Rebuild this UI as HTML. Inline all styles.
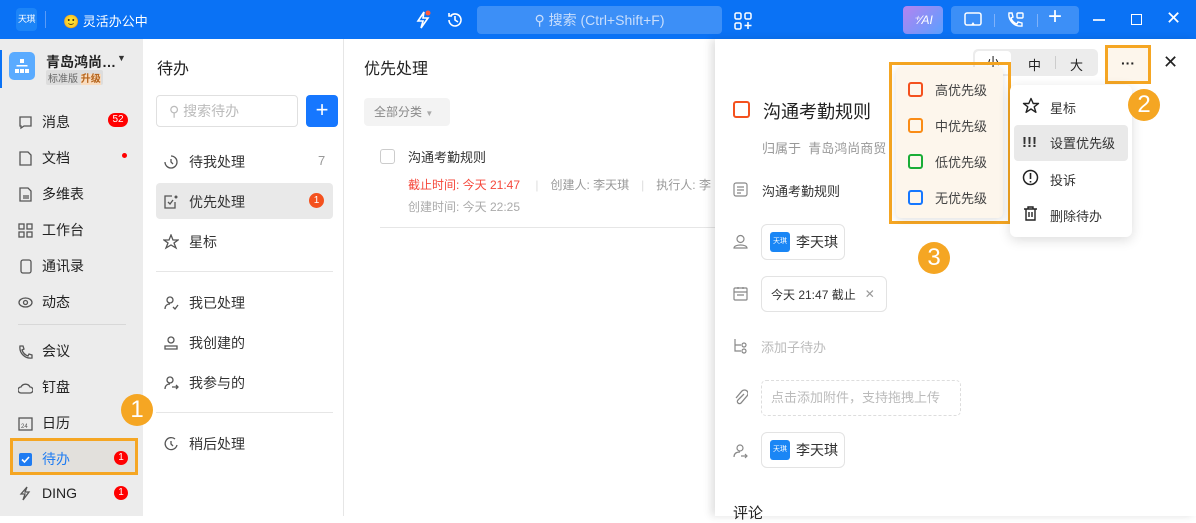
<!DOCTYPE html>
<html><head><meta charset="utf-8"><style>
*{margin:0;padding:0;box-sizing:border-box}
body{width:1196px;height:516px;overflow:hidden;position:relative;font-family:"Liberation Sans","Noto Sans CJK SC",sans-serif;background:#fff;color:#222}
.a{position:absolute}
.top{left:0;top:0;width:1196px;height:39px;background:#0a72f5}
.side{left:0;top:39px;width:143px;height:477px;background:#ececec}
.col2{left:143px;top:39px;width:201px;height:477px;background:#fff;border-right:1px solid #e6e6e6}
.nav{position:absolute;left:18px;font-size:14px;color:#222;display:flex;align-items:center}
.nav svg{margin-right:9px}
.badge{position:absolute;background:#f00;color:#fff;border-radius:9px;font-size:10px;text-align:center;line-height:14px;height:14px}
.c2{position:absolute;left:163px;font-size:14px;color:#333;display:flex;align-items:center}
.c2 svg{margin-right:10px}
.num{position:absolute;width:32px;height:32px;border-radius:50%;background:#f5a623;color:#fff;font-size:24px;text-align:center;line-height:32px}
.pr{position:absolute;left:908px;display:flex;align-items:center;font-size:13px;color:#444}
.pr i{display:inline-block;width:15px;height:15px;border:2px solid;border-radius:3px;margin-right:12px}
.mi{position:absolute;left:1022px;font-size:13px;color:#333;display:flex;align-items:center}
.chip{position:absolute;border:1px solid #e3e3e3;border-radius:6px;display:flex;align-items:center;font-size:14px;color:#333}
.av{width:20px;height:20px;background:#1a86f5;color:#fff;font-size:7px;border-radius:3px;text-align:center;line-height:20px;margin:0 6px 0 8px;white-space:nowrap;overflow:hidden}
.ic{position:absolute;left:733px}
</style></head><body>
<div class="a top"></div>
<div class="a" style="left:16px;top:8px;width:21px;height:23px;background:#1c84f7;border-radius:4px;color:#fff;font-size:9px;line-height:23px;text-align:center;white-space:nowrap;overflow:hidden;letter-spacing:-0.5px">天琪</div>
<div class="a" style="left:45px;top:11px;width:1px;height:17px;background:#5a9bf7"></div>
<div class="a" style="left:63px;top:11px;color:#fff;font-size:13px">🙂 灵活办公中</div>
<svg class="a" style="left:414px;top:10px" width="18" height="20" viewBox="0 0 18 20"><path d="M10 2 L4 11 H9 L7 18 L14 8 H9 Z" fill="none" stroke="#fff" stroke-width="1.6"/><circle cx="14" cy="3" r="2.5" fill="#ff5a3c"/></svg>
<svg class="a" style="left:446px;top:11px" width="18" height="18" viewBox="0 0 18 18"><path d="M3 9a6 6 0 1 0 2-4.5M3 2v3h3M9 5v4l3 2" fill="none" stroke="#fff" stroke-width="1.6"/></svg>
<div class="a" style="left:477px;top:6px;width:245px;height:28px;background:#3c8ff7;border-radius:4px;color:#c9defc;font-size:14px;line-height:28px;text-align:center">⚲ 搜索 (Ctrl+Shift+F)</div>
<svg class="a" style="left:734px;top:12px" width="18" height="18" viewBox="0 0 18 18"><g fill="none" stroke="#fff" stroke-width="1.5"><rect x="1" y="1" width="6" height="6" rx="1.5"/><rect x="11" y="1" width="6" height="6" rx="1.5"/><rect x="1" y="11" width="6" height="6" rx="1.5"/><path d="M14 10v7M10.5 13.5h7"/></g></svg>
<div class="a" style="left:903px;top:6px;width:40px;height:28px;border-radius:4px;background:linear-gradient(135deg,#b383f0,#5aa0ff);color:#fff;font-size:12px;line-height:28px;text-align:center;font-style:italic">⁺⁄AI</div>
<div class="a" style="left:951px;top:6px;width:128px;height:28px;border-radius:4px;background:#3c8ff7"></div>
<svg class="a" style="left:964px;top:12px" width="18" height="16"><rect x="1" y="1" width="16" height="12" rx="2" fill="none" stroke="#fff" stroke-width="1.5"/><path d="M7 13l2-3 2 3z" fill="#fff"/></svg>
<div class="a" style="left:994px;top:14px;width:1px;height:13px;background:#7fb2fa"></div>
<svg class="a" style="left:1006px;top:11px" width="18" height="18"><path d="M3 2l3 0 1 4-2 1c1 3 3 5 6 6l1-2 4 1v3c-8 1-14-6-13-13z" fill="none" stroke="#fff" stroke-width="1.4"/><rect x="11" y="2" width="6" height="5" rx="1" fill="none" stroke="#fff" stroke-width="1.4"/></svg>
<div class="a" style="left:1037px;top:14px;width:1px;height:13px;background:#7fb2fa"></div>
<div class="a" style="left:1048px;top:3px;color:#fff;font-size:24px;font-weight:300">+</div>
<div class="a" style="left:1093px;top:19px;width:12px;height:1.5px;background:#d7e7fd"></div>
<div class="a" style="left:1131px;top:14px;width:11px;height:11px;border:1.5px solid #fff"></div>
<div class="a" style="left:1166px;top:8px;color:#fff;font-size:18px">✕</div>

<div class="a side"></div>
<div class="a" style="left:0;top:50px;width:2px;height:38px;background:#0a72f5"></div>
<div class="a" style="left:9px;top:52px;width:26px;height:28px;background:#5aabff;border-radius:5px"></div>
<svg class="a" style="left:14px;top:58px" width="16" height="16"><g fill="#fff"><rect x="6" y="1" width="4" height="4"/><rect x="1" y="11" width="4" height="4"/><rect x="6" y="11" width="4" height="4"/><rect x="11" y="11" width="4" height="4"/><rect x="2.5" y="7" width="11" height="1.5"/></g></svg>
<div class="a" style="left:46px;top:52px;font-size:14px;font-weight:bold;color:#222">青岛鸿尚…</div>
<div class="a" style="left:117px;top:53px;font-size:9px;color:#333">▼</div>
<div class="a" style="left:46px;top:70px;font-size:10px;color:#666;background:#ddd;padding:0 2px;border-radius:2px">标准版 <b style="color:#b5651d;background:#f9dcbf">升级</b></div>
<div class="nav" style="top:112px"><svg width="15" height="15"><path d="M2 2h11v9H6l-3 2v-2H2z" fill="none" stroke="#555" stroke-width="1.3"/></svg>消息</div>
<div class="badge" style="left:108px;top:113px;width:20px">52</div>
<div class="nav" style="top:148px"><svg width="15" height="15"><path d="M2 1h8l3 3v10H2z" fill="none" stroke="#555" stroke-width="1.3"/></svg>文档</div>
<div class="a" style="left:122px;top:153px;width:5px;height:5px;border-radius:50%;background:#f00"></div>
<div class="nav" style="top:184px"><svg width="15" height="15"><path d="M2 1h8l3 3v10H2zM5 9h6M5 11h6" fill="none" stroke="#555" stroke-width="1.3"/></svg>多维表</div>
<div class="nav" style="top:220px"><svg width="15" height="15"><g fill="none" stroke="#555" stroke-width="1.3"><rect x="1" y="1" width="5" height="5"/><rect x="9" y="1" width="5" height="5"/><rect x="1" y="9" width="5" height="5"/><rect x="9" y="9" width="5" height="5"/></g></svg>工作台</div>
<div class="nav" style="top:256px"><svg width="15" height="15"><rect x="3" y="1" width="10" height="13" rx="2" fill="none" stroke="#555" stroke-width="1.3"/></svg>通讯录</div>
<div class="nav" style="top:292px"><svg width="15" height="15"><ellipse cx="7.5" cy="7.5" rx="6.5" ry="4.5" fill="none" stroke="#555" stroke-width="1.3"/><circle cx="7.5" cy="7.5" r="2" fill="none" stroke="#555" stroke-width="1.3"/></svg>动态</div>
<div class="a" style="left:18px;top:324px;width:108px;height:1px;background:#d8d8d8"></div>
<div class="nav" style="top:341px"><svg width="15" height="15"><path d="M2 2l3 0 1 3-2 1c1 3 3 5 6 6l1-2 3 1v3C7 15 1 9 2 2z" fill="none" stroke="#555" stroke-width="1.3"/></svg>会议</div>
<div class="nav" style="top:377px"><svg width="15" height="15"><path d="M3 13h9a3 3 0 0 0 0-6 5 5 0 0 0-9 0 3 3 0 0 0 0 6z" fill="none" stroke="#555" stroke-width="1.3"/></svg>钉盘</div>
<div class="nav" style="top:413px"><svg width="15" height="15"><rect x="1" y="2" width="13" height="12" fill="none" stroke="#555" stroke-width="1.3"/><text x="3" y="12" font-size="6" fill="#555">24</text></svg>日历</div>
<div class="a" style="left:10px;top:438px;width:128px;height:37px;background:#e2e0dc;border:3px solid #f5a623"></div>
<div class="nav" style="top:449px;color:#1f7cf2"><svg width="15" height="15"><rect x="1" y="1" width="13" height="13" rx="2" fill="#1f7cf2"/><path d="M4 7.5l2.5 2.5 4.5-5" fill="none" stroke="#fff" stroke-width="1.6"/></svg>待办</div>
<div class="badge" style="left:114px;top:451px;width:14px">1</div>
<div class="nav" style="top:485px"><svg width="15" height="15"><path d="M9 1L3 8h4l-2 6 6-8H7z" fill="none" stroke="#555" stroke-width="1.3"/></svg>DING</div>
<div class="badge" style="left:114px;top:486px;width:14px">1</div>

<div class="a col2"></div>
<div class="num" style="left:121px;top:394px">1</div>
<div class="a" style="left:157px;top:55px;font-size:16px;color:#222">待办</div>
<div class="a" style="left:156px;top:95px;width:142px;height:32px;border:1px solid #e0e0e0;border-radius:4px;color:#bbb;font-size:14px;line-height:30px;padding-left:12px">⚲ 搜索待办</div>
<div class="a" style="left:306px;top:95px;width:32px;height:32px;background:#1677ff;border-radius:4px;color:#fff;font-size:22px;line-height:30px;text-align:center">+</div>
<div class="c2" style="top:152px"><svg width="16" height="16"><path d="M8 2a6 6 0 1 1-6 6M8 5v3l2 2" fill="none" stroke="#555" stroke-width="1.3"/></svg>待我处理</div>
<div class="a" style="left:318px;top:153px;font-size:13px;color:#999">7</div>
<div class="a" style="left:156px;top:183px;width:177px;height:36px;background:#e9e9e9;border-radius:4px"></div>
<div class="c2" style="top:192px"><svg width="16" height="16"><path d="M12 8v6H2V2h7M5 8l2 2 3-4" fill="none" stroke="#555" stroke-width="1.3"/><circle cx="13" cy="3" r="1.5" fill="#555"/></svg>优先处理</div>
<div class="a" style="left:309px;top:193px;width:15px;height:15px;border-radius:50%;background:#f4511e;color:#fff;font-size:10px;text-align:center;line-height:15px">1</div>
<div class="c2" style="top:232px"><svg width="16" height="16"><path d="M8 1l2 5h5l-4 3 2 5-5-3-5 3 2-5-4-3h5z" fill="none" stroke="#555" stroke-width="1.3"/></svg>星标</div>
<div class="a" style="left:156px;top:271px;width:177px;height:1px;background:#e6e6e6"></div>
<div class="c2" style="top:293px"><svg width="16" height="16"><circle cx="7" cy="5" r="3" fill="none" stroke="#555" stroke-width="1.3"/><path d="M2 14c0-4 3-5 5-5M10 12l2 2 3-4" fill="none" stroke="#555" stroke-width="1.3"/></svg>我已处理</div>
<div class="c2" style="top:333px"><svg width="16" height="16"><circle cx="8" cy="5" r="3" fill="none" stroke="#555" stroke-width="1.3"/><path d="M2 14h12v-3H2z" fill="none" stroke="#555" stroke-width="1.3"/></svg>我创建的</div>
<div class="c2" style="top:373px"><svg width="16" height="16"><circle cx="7" cy="5" r="3" fill="none" stroke="#555" stroke-width="1.3"/><path d="M2 14c0-4 3-5 5-5M9 12h6M13 10l2 2-2 2" fill="none" stroke="#555" stroke-width="1.3"/></svg>我参与的</div>
<div class="a" style="left:156px;top:412px;width:177px;height:1px;background:#e6e6e6"></div>
<div class="c2" style="top:434px"><svg width="16" height="16"><path d="M12 3a6 6 0 1 0 2 6M8 5v3l2 2" fill="none" stroke="#555" stroke-width="1.3"/></svg>稍后处理</div>

<div class="a" style="left:364px;top:55px;font-size:16px;color:#222">优先处理</div>
<div class="a" style="left:364px;top:98px;width:86px;height:28px;background:#f3f3f3;border-radius:4px;font-size:12px;color:#888;line-height:28px;padding-left:10px">全部分类 <span style="font-size:8px;color:#aaa">▼</span></div>
<div class="a" style="left:380px;top:149px;width:15px;height:15px;border:1px solid #ccc;border-radius:3px"></div>
<div class="a" style="left:408px;top:147px;font-size:13px;color:#333">沟通考勤规则</div>
<div class="a" style="left:408px;top:176px;font-size:12px;color:#f5483b;white-space:nowrap">截止时间: 今天 21:47 <span style="color:#ddd;margin:0 12px">|</span><span style="color:#999">创建人: 李天琪</span><span style="color:#ddd;margin:0 12px">|</span><span style="color:#999">执行人: 李</span></div>
<div class="a" style="left:408px;top:198px;font-size:12px;color:#aaa">创建时间: 今天 22:25</div>
<div class="a" style="left:380px;top:227px;width:335px;height:1px;background:#e6e6e6"></div>

<div class="a" style="left:715px;top:39px;width:481px;height:477px;background:#fff;box-shadow:-4px 0 8px rgba(0,0,0,.12)"></div>
<div class="a" style="left:973px;top:49px;width:125px;height:27px;background:#ececec;border-radius:5px"></div>
<div class="a" style="left:975px;top:51px;width:36px;height:23px;background:#fff;border-radius:4px;text-align:center;font-size:13px;line-height:23px">小</div>
<div class="a" style="left:1028px;top:55px;font-size:13px">中</div>
<div class="a" style="left:1055px;top:56px;width:1px;height:13px;background:#ccc"></div>
<div class="a" style="left:1070px;top:55px;font-size:13px">大</div>
<div class="a" style="left:1105px;top:45px;width:46px;height:39px;border:3px solid #f5a623;background:#fdf6ec;text-align:center;font-size:14px;line-height:30px;font-weight:bold">···</div>
<div class="a" style="left:1163px;top:52px;font-size:18px;color:#222">✕</div>

<div class="a" style="left:733px;top:101px;width:17px;height:17px;border:2px solid #f4511e;border-radius:3px"></div>
<div class="a" style="left:763px;top:98px;font-size:18px;color:#222">沟通考勤规则</div>
<div class="a" style="left:762px;top:138px;font-size:13px;color:#999">归属于&nbsp;&nbsp;青岛鸿尚商贸</div>
<svg class="ic" style="top:182px" width="15" height="15"><rect x="1" y="1" width="13" height="13" rx="2" fill="none" stroke="#888" stroke-width="1.2"/><path d="M4 5h7M4 8h7M4 11h4" stroke="#888" stroke-width="1.2"/></svg>
<div class="a" style="left:762px;top:181px;font-size:13px;color:#333">沟通考勤规则</div>
<svg class="ic" style="top:234px" width="15" height="15"><circle cx="7.5" cy="5" r="3.5" fill="none" stroke="#888" stroke-width="1.2"/><path d="M1 14c0-4 13-4 13 0z" fill="none" stroke="#888" stroke-width="1.2"/></svg>
<div class="chip" style="left:761px;top:224px;width:84px;height:36px"><span class="av">天琪</span>李天琪</div>
<svg class="ic" style="top:286px" width="15" height="15"><rect x="1" y="2" width="13" height="12" rx="1" fill="none" stroke="#888" stroke-width="1.2"/><path d="M1 6h13M4 9h7M5 1v2M10 1v2" stroke="#888" stroke-width="1.2"/></svg>
<div class="chip" style="left:761px;top:276px;width:126px;height:36px;font-size:12px;padding-left:9px">今天 21:47 截止 <span style="color:#999;margin-left:9px">✕</span></div>
<svg class="ic" style="top:338px" width="15" height="16"><path d="M2 1v12h6M2 7h6" fill="none" stroke="#888" stroke-width="1.2"/><circle cx="11" cy="7" r="2" fill="none" stroke="#888" stroke-width="1.2"/><circle cx="11" cy="13" r="2" fill="none" stroke="#888" stroke-width="1.2"/></svg>
<div class="a" style="left:761px;top:337px;font-size:13px;color:#bbb">添加子待办</div>
<svg class="ic" style="top:389px" width="15" height="16"><path d="M11 5l-6 6a2 2 0 0 0 3 3l6-7a3.5 3.5 0 0 0-5-5l-6 7" fill="none" stroke="#888" stroke-width="1.3"/></svg>
<div class="a" style="left:761px;top:380px;width:200px;height:36px;border:1px dashed #ddd;border-radius:5px;font-size:13px;color:#bbb;line-height:34px;padding-left:9px">点击添加附件，支持拖拽上传</div>
<svg class="ic" style="top:443px" width="15" height="16"><circle cx="7" cy="5" r="3" fill="none" stroke="#888" stroke-width="1.2"/><path d="M1 14c0-4 3-5 6-5M8 13h6M12 11l2 2-2 2" fill="none" stroke="#888" stroke-width="1.2"/></svg>
<div class="chip" style="left:761px;top:432px;width:84px;height:36px"><span class="av">天琪</span>李天琪</div>
<div class="a" style="left:733px;top:502px;font-size:15px;color:#222">评论</div>

<div class="a" style="left:889px;top:62px;width:122px;height:162px;border:3px solid #f5a623"></div>
<div class="a" style="left:896px;top:67px;width:107px;height:151px;background:#fdf6ec;border-radius:5px;box-shadow:0 2px 8px rgba(0,0,0,.12)"></div>
<div class="pr" style="top:80px"><i style="border-color:#f4511e"></i>高优先级</div>
<div class="pr" style="top:116px"><i style="border-color:#fa8c16"></i>中优先级</div>
<div class="pr" style="top:152px"><i style="border-color:#1aad37"></i>低优先级</div>
<div class="pr" style="top:188px"><i style="border-color:#1677ff"></i>无优先级</div>

<div class="a" style="left:1010px;top:85px;width:122px;height:152px;background:#fff;border-radius:6px;box-shadow:0 3px 12px rgba(0,0,0,.14)"></div>
<div class="a" style="left:1014px;top:125px;width:114px;height:36px;background:#e9e9e9;border-radius:4px"></div>
<div class="mi" style="top:97px"><span style="width:28px"><svg width="18" height="18"><path d="M9 1.5l2.2 5h5.3l-4.3 3.3 1.7 5.5L9 12l-4.9 3.3 1.7-5.5L1.5 6.5h5.3z" fill="none" stroke="#222" stroke-width="1.4" stroke-linejoin="round"/></svg></span>星标</div>
<div class="mi" style="top:133px"><span style="font-size:15px;width:28px;font-weight:bold">!!!</span>设置优先级</div>
<div class="mi" style="top:169px"><span style="width:28px"><svg width="17" height="17"><circle cx="8.5" cy="8.5" r="7" fill="none" stroke="#222" stroke-width="1.5"/><path d="M8.5 4v6M8.5 12v1.5" stroke="#222" stroke-width="1.6"/></svg></span>投诉</div>
<div class="mi" style="top:205px"><span style="width:28px"><svg width="17" height="17"><path d="M2 4h13M6 4V2h5v2M4 4v11h9V4M7 7v5M10 7v5" fill="none" stroke="#222" stroke-width="1.4"/></svg></span>删除待办</div>
<div class="num" style="left:1128px;top:89px">2</div>
<div class="num" style="left:918px;top:242px">3</div>
</body></html>
